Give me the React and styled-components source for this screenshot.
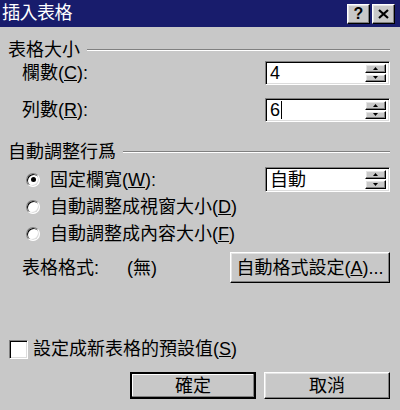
import React from 'react'
import styled, { createGlobalStyle, css } from 'styled-components'

const GlobalStyle = createGlobalStyle`
    html, body {
        margin: 0;
        padding: 0;
        background: #c8c8c8;
    }
    body {
        font-family: "Liberation Sans", "Noto Sans CJK TC", sans-serif;
        color: #000;
    }
`

const raised = css`
    border: 1px solid;
    border-color: #fff #000 #000 #fff;
    box-shadow: inset -1px -1px #808080, inset 1px 1px #e4e4e4;
    background: #c8c8c8;
`

const sunken = css`
    border: 1px solid;
    border-color: #808080 #fff #fff #808080;
    box-shadow: inset 1px 1px #000, inset -1px -1px #dcdcdc;
`

const SpinBox = ({value, caret}) => (
    <SpinField>
        <SpinValue>{value}{caret && <Caret />}</SpinValue>
        <SpinButtons>
            <SpinButton>
                <svg width="5" height="3" viewBox="0 0 5 3"><path d="M2.5 0L5 3H0z" fill="#000" /></svg>
            </SpinButton>
            <SpinButton>
                <svg width="5" height="3" viewBox="0 0 5 3"><path d="M0 0h5L2.5 3z" fill="#000" /></svg>
            </SpinButton>
        </SpinButtons>
    </SpinField>
)

const Radio = ({checked}) => (
    <RadioCircle>{checked && <RadioDot />}</RadioCircle>
)

const App = () => {
    return (
        <>
            <GlobalStyle />
            <Window>
                <TitleBar>
                    <Title>插入表格</Title>
                    <CaptionButtons>
                        <CaptionButton>?</CaptionButton>
                        <CaptionButton>
                            <svg width="11" height="10" viewBox="0 0 11 10">
                                <path d="M1 1L10 9M10 1L1 9" stroke="#000" strokeWidth="2.2" />
                            </svg>
                        </CaptionButton>
                    </CaptionButtons>
                </TitleBar>
                <Body>
                    <GroupHeader $top={13}>表格大小<Rule /></GroupHeader>
                    <FieldRow $top={1}>
                        <span>欄數(<u>C</u>):</span>
                        <SpinBox value="4" />
                    </FieldRow>
                    <FieldRow $top={13}>
                        <span>列數(<u>R</u>):</span>
                        <SpinBox value="6" caret />
                    </FieldRow>

                    <GroupHeader $top={20}>自動調整行爲<Rule /></GroupHeader>
                    <RadioRow $top={5} $height={25}>
                        <Radio checked />
                        <RadioText>固定欄寬(<u>W</u>):</RadioText>
                        <SpinBox value="自動" />
                    </RadioRow>
                    <RadioRow $top={3}>
                        <Radio />
                        <RadioText>自動調整成視窗大小(<u>D</u>)</RadioText>
                    </RadioRow>
                    <RadioRow $top={3}>
                        <Radio />
                        <RadioText>自動調整成內容大小(<u>F</u>)</RadioText>
                    </RadioRow>

                    <FormatRow>
                        <FormatLabel>表格格式:</FormatLabel>
                        <span>(無)</span>
                        <FormatButton>自動格式設定(<u>A</u>)...</FormatButton>
                    </FormatRow>

                    <CheckRow>
                        <CheckBox />
                        <span>設定成新表格的預設值(<u>S</u>)</span>
                    </CheckRow>

                    <ButtonRow>
                        <DialogButton $default>確定</DialogButton>
                        <DialogButton>取消</DialogButton>
                    </ButtonRow>
                </Body>
            </Window>
        </>
    )
}

const Window = styled.div`
    width: 400px;
    height: 410px;
    overflow: hidden;
    display: flex;
    flex-direction: column;
    background: #c8c8c8;
    font-size: 18px;
    line-height: 20px;
`
const TitleBar = styled.div`
    height: 27px;
    flex: none;
    display: flex;
    align-items: center;
    justify-content: space-between;
    padding: 0 5px 1px 2px;
    box-sizing: border-box;
    background: #181c6c;
`
const Title = styled.span`
    color: #fff;
    font-size: 18px;
    letter-spacing: -0.5px;
`
const CaptionButtons = styled.div`
    display: flex;
    gap: 2px;
    margin-top: 2px;
`
const CaptionButton = styled.div`
    ${raised}
    width: 23px;
    height: 20px;
    box-sizing: border-box;
    display: flex;
    align-items: center;
    justify-content: center;
    font-weight: bold;
    font-size: 16px;
    line-height: 16px;
`
const Body = styled.div`
    display: flex;
    flex-direction: column;
    padding: 0 10px 0 8px;
`
const GroupHeader = styled.div`
    margin-top: ${p => p.$top}px;
    height: 20px;
    display: flex;
    align-items: center;
    gap: 7px;
    white-space: nowrap;
`
const Rule = styled.div`
    flex: 1;
    height: 0;
    border-top: 1px solid #808080;
    border-bottom: 1px solid #fff;
`
const FieldRow = styled.div`
    margin-top: ${p => p.$top}px;
    height: 24px;
    display: flex;
    align-items: center;
    justify-content: space-between;
    padding-left: 14px;
`
const SpinField = styled.div`
    ${sunken}
    margin-left: auto;
    width: 125px;
    height: 100%;
    box-sizing: border-box;
    background: #fff;
    display: flex;
    align-items: center;
    padding: 2px 3px 2px 4px;
`
const SpinValue = styled.div`
    flex: 1;
    display: flex;
    align-items: center;
    font-size: 18px;
`
const Caret = styled.span`
    width: 1px;
    height: 18px;
    margin-left: 1px;
    background: #000;
`
const SpinButtons = styled.div`
    align-self: stretch;
    display: flex;
    flex-direction: column;
    justify-content: center;
    gap: 1px;
`
const SpinButton = styled.div`
    ${raised}
    width: 21px;
    height: 9px;
    box-sizing: border-box;
    display: flex;
    align-items: center;
    justify-content: center;
`
const RadioRow = styled.div`
    margin-top: ${p => p.$top}px;
    height: ${p => p.$height || 24}px;
    display: flex;
    align-items: center;
    padding-left: 18px;
`
const RadioCircle = styled.div`
    width: 14px;
    height: 14px;
    flex: none;
    box-sizing: border-box;
    border-radius: 50%;
    border: 1px solid;
    border-color: #808080 #fff #fff #808080;
    box-shadow: inset 1px 1px #000, inset -1px -1px #dcdcdc;
    background: #fff;
    display: flex;
    align-items: center;
    justify-content: center;
`
const RadioDot = styled.div`
    width: 5px;
    height: 5px;
    border-radius: 50%;
    background: #000;
`
const RadioText = styled.span`
    margin-left: 10px;
    white-space: nowrap;
`
const FormatRow = styled.div`
    margin-top: 6px;
    height: 31px;
    display: flex;
    align-items: center;
    padding-left: 14px;
`
const FormatLabel = styled.span`
    width: 105px;
`
const FormatButton = styled.div`
    ${raised}
    margin-left: auto;
    width: 160px;
    height: 100%;
    box-sizing: border-box;
    display: flex;
    align-items: center;
    justify-content: center;
    white-space: nowrap;
`
const CheckRow = styled.div`
    margin-top: 56px;
    height: 20px;
    display: flex;
    align-items: center;
    gap: 5px;
    padding-left: 1px;
`
const CheckBox = styled.div`
    ${sunken}
    width: 19px;
    height: 19px;
    box-sizing: border-box;
    background: #fff;
`
const ButtonRow = styled.div`
    margin-top: 13px;
    display: flex;
    justify-content: flex-end;
    gap: 8px;
`
const DialogButton = styled.div`
    ${raised}
    width: 126px;
    height: 27px;
    box-sizing: border-box;
    display: flex;
    align-items: center;
    justify-content: center;
    ${p => p.$default && css`
        border: 2px solid #000;
        box-shadow: inset -1px -1px #808080, inset 1px 1px #fff;
    `}
`

export default App
